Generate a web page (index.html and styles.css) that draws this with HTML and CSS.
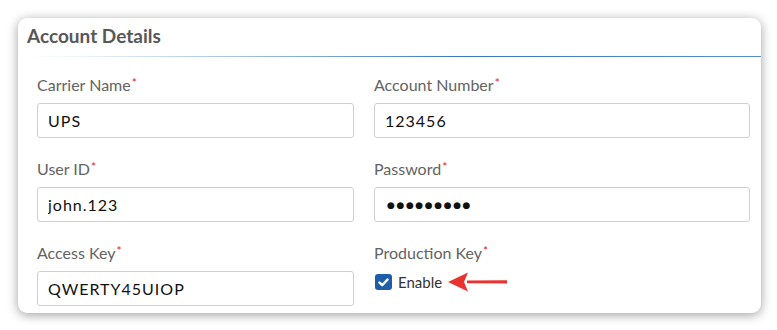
FILE: index.html
```html
<!DOCTYPE html>
<html lang="en">
  <head>
    <meta charset="UTF-8" />
    <title>Account Details</title>
    <link rel="stylesheet" href="styles.css">
  </head>
  <body>
    <div class="card">
      <h3 class="card-title">Account Details</h3>
      <div class="divider"></div>
      <div class="form-grid">
        <div class="field">
          <label>Carrier Name<span class="req">*</span></label>
          <input type="text" value="UPS" />
        </div>
        <div class="field">
          <label>Account Number<span class="req">*</span></label>
          <input type="text" value="123456" />
        </div>
        <div class="field">
          <label>User ID<span class="req">*</span></label>
          <input type="text" value="john.123" />
        </div>
        <div class="field">
          <label>Password<span class="req">*</span></label>
          <input type="text" class="secret" value="●●●●●●●●●" />
        </div>
        <div class="field">
          <label>Access Key<span class="req">*</span></label>
          <input type="text" value="QWERTY45UIOP" />
        </div>
        <div class="field">
          <label>Production Key<span class="req">*</span></label>
          <div class="check-row">
            <span class="checkbox">
              <svg width="11" height="9" viewBox="0 0 11 9">
                <path d="M1.5 4.6 L4.2 7.2 L9.5 1.6" fill="none" stroke="#fff" stroke-width="2.4" stroke-linecap="round" stroke-linejoin="round" />
              </svg>
            </span>
            <span class="check-label">Enable</span>
            <svg class="arrow" width="62" height="22" viewBox="0 0 62 22">
              <path d="M20 9.6 L60 9.2 L60 12.4 L20 12.2 Z" fill="#e8332f" />
              <path d="M1 11 L21 1.5 L17 11 L21 20.5 Z" fill="#e8332f" />
            </svg>
          </div>
        </div>
      </div>
    </div>
  </body>
</html>
```

FILE: styles.css
```css
* {
  box-sizing: border-box;
  margin: 0;
  padding: 0;
}
body {
  font-family: Lato, "Open Sans", sans-serif;
  background: #fff;
  padding: 18px 17px 17px 18px;
}
.card {
  width: 743px;
  height: 295px;
  background: #fff;
  border-radius: 9px;
  box-shadow: 0 2px 11px rgba(0, 0, 0, 0.38);
  overflow: hidden;
}
.card-title {
  font-size: 19px;
  font-weight: bold;
  color: #575757;
  padding: 6px 9px 0;
  height: 38px;
}
.divider {
  height: 1px;
  background: linear-gradient(to right, #ffffff 2%, #d6e4f2 15%, #3a76bd 60%, #5a8fcc 100%);
}
.form-grid {
  display: grid;
  grid-template-columns: 317px 376px;
  column-gap: 20px;
  row-gap: 19px;
  padding: 16px 0 0 19px;
}
.field label {
  display: block;
  font-size: 16px;
  line-height: 20px;
  color: #636363;
  margin-bottom: 8px;
}
.req {
  color: #e02424;
  font-size: 12px;
  vertical-align: 4px;
  margin-left: 1px;
}
.field input {
  display: block;
  width: 100%;
  height: 35px;
  border: 1px solid #cfcfcf;
  border-radius: 3px;
  padding: 0 10px;
  font-family: Lato, "Open Sans", sans-serif;
  font-size: 16px;
  letter-spacing: 1px;
  color: #111;
  background: #fff;
}
.field input.secret {
  font-family: "DejaVu Sans", sans-serif;
  font-size: 9px;
  letter-spacing: 1.6px;
  padding-left: 12px;
}
.check-row {
  display: flex;
  align-items: center;
  height: 22px;
}
.checkbox {
  width: 17px;
  height: 16px;
  border-radius: 3px;
  background: #1f5daa;
  display: flex;
  align-items: center;
  justify-content: center;
  margin-left: 1px;
}
.check-label {
  font-size: 15px;
  color: #333;
  margin-left: 6px;
}
.arrow {
  margin-left: 5px;
}
```
